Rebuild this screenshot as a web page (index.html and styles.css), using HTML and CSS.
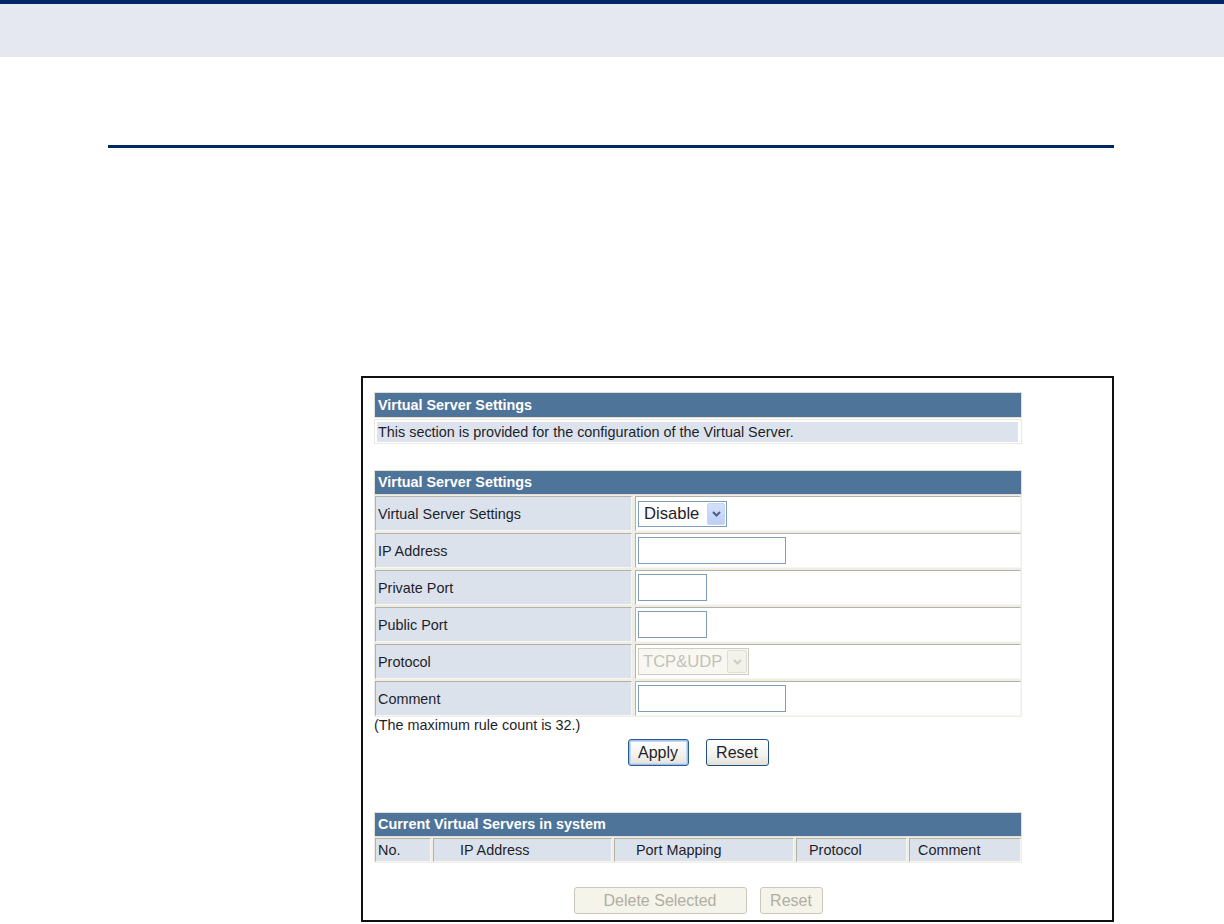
FILE: index.html
```html
<!DOCTYPE html>
<html>
<head>
<meta charset="utf-8">
<title>Virtual Server Settings</title>
<link rel="stylesheet" href="styles.css">
</head>
<body>
<div class="topbar"></div>
<div class="band"></div>
<div class="rule"></div>

<div class="frame">
  <div class="tbl t1">
    <div class="hdr">Virtual Server Settings</div>
    <div class="desc"><div class="desc-fill">This section is provided for the configuration of the Virtual Server.</div></div>
  </div>

  <div class="tbl t2">
    <div class="hdr">Virtual Server Settings</div>
    <div class="form-grid">
      <div class="cell label">Virtual Server Settings</div>
      <div class="cell value">
        <div class="sel">
          <span class="sel-text">Disable</span>
          <span class="sel-btn"><svg width="9" height="6" viewBox="0 0 9 6"><path d="M1 1 L4.5 4.5 L8 1" fill="none" stroke="#4d5f86" stroke-width="2"/></svg></span>
        </div>
      </div>
      <div class="cell label">IP Address</div>
      <div class="cell value"><input class="inp inp-long" type="text"></div>
      <div class="cell label">Private Port</div>
      <div class="cell value"><input class="inp inp-short" type="text"></div>
      <div class="cell label">Public Port</div>
      <div class="cell value"><input class="inp inp-short" type="text"></div>
      <div class="cell label">Protocol</div>
      <div class="cell value">
        <div class="sel sel-disabled">
          <span class="sel-text">TCP&amp;UDP</span>
          <span class="sel-btn"><svg width="9" height="6" viewBox="0 0 9 6"><path d="M1 1 L4.5 4.5 L8 1" fill="none" stroke="#cfcdc2" stroke-width="2"/></svg></span>
        </div>
      </div>
      <div class="cell label">Comment</div>
      <div class="cell value"><input class="inp inp-long" type="text"></div>
    </div>
  </div>

  <div class="note">(The maximum rule count is 32.)</div>
  <div class="btn-row btn-row-top">
    <button class="btn btn-default">Apply</button>
    <button class="btn">Reset</button>
  </div>

  <div class="tbl t3">
    <div class="hdr">Current Virtual Servers in system</div>
    <div class="list-grid">
      <div class="cell col col-no">No.</div>
      <div class="cell col col-ip">IP Address</div>
      <div class="cell col col-port">Port Mapping</div>
      <div class="cell col col-proto">Protocol</div>
      <div class="cell col col-comment">Comment</div>
    </div>
  </div>

  <div class="btn-row btn-row-bottom">
    <button class="btn btn-disabled btn-wide" disabled>Delete Selected</button>
    <button class="btn btn-disabled" disabled>Reset</button>
  </div>
</div>
</body>
</html>
```

FILE: styles.css
```css
html, body {
  margin: 0;
  padding: 0;
  background: #ffffff;
}

body {
  font-family: "Liberation Sans", Arial, sans-serif;
  color: #1e1e2a;
}

.topbar {
  height: 4px;
  background: #002664;
}

.band {
  height: 53px;
  background: #e6e8f1;
}

.rule {
  margin: 88px 0 0 108px;
  width: 1006px;
  height: 3px;
  background: #002664;
}

.frame {
  box-sizing: border-box;
  margin: 228px 0 0 361px;
  width: 753px;
  height: 546px;
  border: 2px solid #111111;
  padding: 0 0 0 11px;
}

.tbl {
  width: 648px;
}

.t1 {
  margin-top: 14px;
}

.t2 {
  margin-top: 26px;
}

.t3 {
  margin-top: 46px;
}

.hdr {
  box-sizing: border-box;
  height: 25px;
  border: 1px solid #e2e0d5;
  background: #4e7499;
  color: #ffffff;
  font-weight: bold;
  font-size: 14.4px;
  line-height: 23px;
  padding-left: 3px;
}

.t1 .hdr {
  height: 26px;
  line-height: 24px;
}

.desc {
  box-sizing: border-box;
  margin-top: 1px;
  height: 25px;
  border: 1px solid #ebe9de;
  padding: 2px 3px 1px 2px;
  background: #ffffff;
}

.desc-fill {
  height: 20px;
  background: #dde3ed;
  font-size: 14.4px;
  line-height: 20px;
  padding-left: 1px;
  white-space: nowrap;
}

.form-grid {
  display: grid;
  grid-template-columns: 257px 386px;
  grid-auto-rows: 35px;
  column-gap: 3px;
  row-gap: 2px;
  padding: 1px 1px 1px 1px;
  background: #efeee6;
}

.list-grid {
  display: grid;
  grid-template-columns: 56px 179px 180px 111px 112px;
  grid-auto-rows: 24px;
  column-gap: 2px;
  padding: 1px 1px 1px 1px;
  background: #efeee6;
}

.cell {
  box-sizing: border-box;
  border-top: 1px solid #b4b2a8;
  border-left: 1px solid #b4b2a8;
  border-right: 1px solid #f7f6f0;
  border-bottom: 1px solid #f7f6f0;
  display: flex;
  align-items: center;
  font-size: 14.4px;
  white-space: nowrap;
}

.label {
  background: #dbe2ec;
  padding-left: 2px;
}

.value {
  background: #ffffff;
  padding-left: 2px;
}

.col {
  background: #dbe2ec;
}

.col-no { padding-left: 2px; }
.col-ip { padding-left: 26px; }
.col-port { padding-left: 21px; }
.col-proto { padding-left: 12px; }
.col-comment { padding-left: 8px; }

.inp {
  box-sizing: border-box;
  height: 27px;
  margin: 0;
  border: 1px solid #7f9db9;
  background: #ffffff;
  padding: 0 2px;
  font-family: "Liberation Sans", Arial, sans-serif;
  font-size: 16px;
  outline: none;
}

.inp-long { width: 148px; }
.inp-short { width: 69px; }

.sel {
  box-sizing: border-box;
  display: flex;
  align-items: center;
  height: 26px;
  width: 89px;
  border: 1px solid #7f9db9;
  background: #ffffff;
  padding: 1px;
  font-size: 16.6px;
  color: #1e1e2a;
}

.sel-text {
  flex: 1;
  padding-left: 4px;
}

.sel-btn {
  box-sizing: border-box;
  width: 18px;
  height: 22px;
  display: flex;
  align-items: center;
  justify-content: center;
  background: linear-gradient(#d3e0fb, #bccff5);
  border: 1px solid #c5d5f5;
  border-radius: 2px;
}

.sel-disabled {
  width: 111px;
  height: 27px;
  border-color: #cfcdc2;
  background: #f8f7f2;
  color: #c4c2b6;
}

.sel-disabled .sel-text {
  padding-left: 3px;
}

.sel-disabled .sel-btn {
  width: 20px;
  height: 23px;
  background: #f2f1ea;
  border: 1px solid #e0ded4;
}

.note {
  margin-top: 0;
  font-size: 14.4px;
  line-height: 17px;
  height: 17px;
}

.btn-row {
  display: flex;
  justify-content: center;
  width: 648px;
}

.btn-row-top {
  margin-top: 5px;
  gap: 17px;
}

.btn-row-bottom {
  margin-top: 24px;
  gap: 13px;
}

.btn {
  box-sizing: border-box;
  height: 27px;
  min-width: 61px;
  margin: 0;
  padding: 0 8px;
  border: 1px solid #1d4f80;
  border-radius: 3px;
  background: linear-gradient(#ffffff, #f3f2ec 60%, #e3e1d6);
  font-family: "Liberation Sans", Arial, sans-serif;
  font-size: 16px;
  color: #1e1e2a;
}

.btn-default {
  border-color: #2a5d93;
  box-shadow: inset 0 0 0 1px #9fbde8, inset 0 0 0 2px #c6d8f3;
  width: 61px;
}

.btn + .btn {
  width: 63px;
}

.btn-disabled {
  border-color: #cbc8ba;
  background: #f5f4eb;
  color: #b1ae9f;
}

.btn-wide {
  width: 173px;
}
```
